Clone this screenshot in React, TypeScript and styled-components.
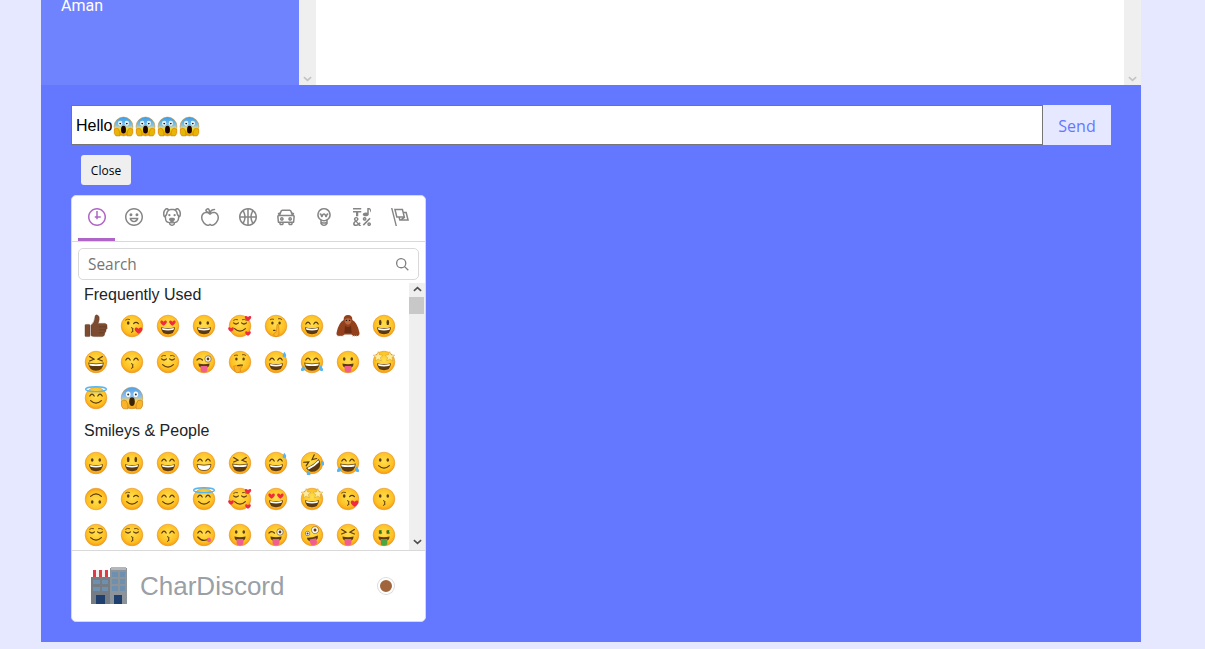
import React from "react";
import styled, { createGlobalStyle } from "styled-components";

const GlobalStyle = createGlobalStyle`
  html, body {
    margin: 0;
    height: 100%;
    overflow: hidden;
    background-color: #e6e8ff;
  }
`;

const BROWN = "#5b3a12";
const RED = "#ef2b3f";
const BLUE = "#56b4f0";
const PINK = "#f0608f";

type Eyes = "dot" | "tall" | "arc" | "cross" | "closed" | "wink" | "heart" | "star" | "flat" | "winkBig" | "zany";
type Mouth = "grin" | "beam" | "wide" | "smile" | "small" | "kiss" | "tongue" | "yum" | "none";
type Extra = "hearts" | "halo" | "sweat" | "tears" | "kissHeart" | "shush" | "think" | "money";

interface FaceSpec {
  eyes: Eyes;
  mouth: Mouth;
  extra?: Extra;
  rotate?: number;
}

const FACES: Record<string, FaceSpec> = {
  grinning: { eyes: "dot", mouth: "grin" },
  smiley: { eyes: "tall", mouth: "grin" },
  smile: { eyes: "arc", mouth: "grin" },
  beam: { eyes: "arc", mouth: "beam" },
  laughing: { eyes: "cross", mouth: "wide" },
  sweat: { eyes: "arc", mouth: "grin", extra: "sweat" },
  rofl: { eyes: "cross", mouth: "wide", extra: "tears", rotate: -35 },
  joy: { eyes: "arc", mouth: "wide", extra: "tears" },
  slight: { eyes: "dot", mouth: "smile" },
  upside: { eyes: "dot", mouth: "smile", rotate: 180 },
  wink: { eyes: "wink", mouth: "smile" },
  blush: { eyes: "arc", mouth: "smile" },
  halo: { eyes: "arc", mouth: "smile", extra: "halo" },
  hearts: { eyes: "closed", mouth: "smile", extra: "hearts" },
  heartEyes: { eyes: "heart", mouth: "grin" },
  star: { eyes: "star", mouth: "grin" },
  kissHeart: { eyes: "wink", mouth: "kiss", extra: "kissHeart" },
  kissing: { eyes: "dot", mouth: "kiss" },
  relaxed: { eyes: "closed", mouth: "smile" },
  kissClosed: { eyes: "closed", mouth: "kiss" },
  kissSmile: { eyes: "arc", mouth: "kiss" },
  yum: { eyes: "arc", mouth: "yum" },
  tongue: { eyes: "dot", mouth: "tongue" },
  winkTongue: { eyes: "winkBig", mouth: "tongue" },
  zany: { eyes: "zany", mouth: "tongue", rotate: -12 },
  squintTongue: { eyes: "cross", mouth: "tongue" },
  money: { eyes: "dot", mouth: "tongue", extra: "money" },
  relieved: { eyes: "closed", mouth: "smile" },
  shush: { eyes: "flat", mouth: "none", extra: "shush" },
  thinking: { eyes: "flat", mouth: "small", extra: "think" },
};

const heart = (x: number, y: number, s: number) =>
  `M${x} ${y + s}C${x - s * 1.8} ${y - s * 0.1} ${x - s * 0.8} ${y - s * 1.2} ${x} ${y - s * 0.3}C${x + s * 0.8} ${y - s * 1.2} ${x + s * 1.8} ${y - s * 0.1} ${x} ${y + s}Z`;

const star = (x: number, y: number, r: number) => {
  let d = "";
  for (let i = 0; i < 10; i++) {
    const a = (Math.PI * i) / 5 - Math.PI / 2;
    const q = i % 2 ? r * 0.45 : r;
    d += `${i ? "L" : "M"}${(x + q * Math.cos(a)).toFixed(2)} ${(y + q * Math.sin(a)).toFixed(2)}`;
  }
  return d + "Z";
};

const Arc = ({ d, w = 1.2 }: { d: string; w?: number }) => (
  <path d={d} fill="none" stroke={BROWN} strokeWidth={w} strokeLinecap="round" />
);

const FaceEyes = ({ kind }: { kind: Eyes }) => {
  switch (kind) {
    case "dot":
      return (
        <g fill={BROWN}>
          <ellipse cx="8.2" cy="9" rx="1.3" ry="1.8" />
          <ellipse cx="15.8" cy="9" rx="1.3" ry="1.8" />
        </g>
      );
    case "tall":
      return (
        <g fill={BROWN}>
          <ellipse cx="8.2" cy="8.4" rx="1.3" ry="2.7" />
          <ellipse cx="15.8" cy="8.4" rx="1.3" ry="2.7" />
        </g>
      );
    case "arc":
      return (
        <>
          <Arc d="M5.8 10Q8 6.4 10.2 10" />
          <Arc d="M13.8 10Q16 6.4 18.2 10" />
        </>
      );
    case "cross":
      return (
        <>
          <Arc d="M5.6 6.6L10 9.2L5.6 11" />
          <Arc d="M18.4 6.6L14 9.2L18.4 11" />
        </>
      );
    case "closed":
      return (
        <>
          <Arc d="M5.6 8.8Q8 11.2 10.4 8.8" />
          <Arc d="M13.6 8.8Q16 11.2 18.4 8.8" />
          <Arc d="M5.6 6.2Q7.5 4.8 9.6 5.6" w={0.8} />
          <Arc d="M18.4 6.2Q16.5 4.8 14.4 5.6" w={0.8} />
        </>
      );
    case "wink":
      return (
        <>
          <ellipse cx="8.2" cy="9" rx="1.3" ry="1.8" fill={BROWN} />
          <Arc d="M13.6 9.6Q16 7 18.4 9.6" />
          <Arc d="M5.6 6Q7.5 4.6 9.6 5.4" w={0.8} />
        </>
      );
    case "heart":
      return (
        <g fill={RED}>
          <path d={heart(7.6, 8.6, 3.2)} />
          <path d={heart(16.4, 8.6, 3.2)} />
        </g>
      );
    case "star":
      return (
        <g fill="#ffeb9c" stroke="#c58a1a" strokeWidth="0.4">
          <path d={star(6.2, 6.8, 5.2)} />
          <path d={star(17.8, 6.8, 5.2)} />
        </g>
      );
    case "flat":
      return (
        <g fill={BROWN}>
          <ellipse cx="8.4" cy="9" rx="1.2" ry="1.5" />
          <ellipse cx="15.6" cy="9" rx="1.2" ry="1.5" />
          <path d="M6 5.8Q8 4.4 10 5.4" fill="none" stroke={BROWN} strokeWidth="0.8" />
          <path d="M14 4.8Q16 4 18 5.6" fill="none" stroke={BROWN} strokeWidth="0.8" />
        </g>
      );
    case "winkBig":
      return (
        <>
          <Arc d="M5 10Q7.8 7.4 10.4 10" />
          <circle cx="16" cy="9" r="3.2" fill="#fff" stroke={BROWN} strokeWidth="0.6" />
          <circle cx="16" cy="9" r="1.4" fill={BROWN} />
        </>
      );
    case "zany":
      return (
        <>
          <circle cx="8" cy="9.6" r="2.2" fill="#fff" stroke={BROWN} strokeWidth="0.5" />
          <circle cx="8" cy="9.6" r="1" fill={BROWN} />
          <circle cx="16" cy="7.8" r="3.4" fill="#fff" stroke={BROWN} strokeWidth="0.5" />
          <circle cx="16" cy="7.8" r="1.5" fill={BROWN} />
        </>
      );
  }
};

const FaceMouth = ({ kind }: { kind: Mouth }) => {
  switch (kind) {
    case "grin":
      return (
        <>
          <path d="M5 13.2Q12 15 19 13.2Q18.6 20.2 12 20.2Q5.4 20.2 5 13.2Z" fill={BROWN} />
          <path d="M6 14Q12 15.4 18 14L17.6 15.8Q12 17 6.4 15.8Z" fill="#fff" />
        </>
      );
    case "beam":
      return <path d="M5 13.4Q12 15 19 13.4Q18.6 19.6 12 19.6Q5.4 19.6 5 13.4Z" fill="#fff" stroke={BROWN} strokeWidth="0.8" />;
    case "wide":
      return (
        <>
          <path d="M4.2 12.6Q12 14.6 19.8 12.6Q19.2 20.8 12 20.8Q4.8 20.8 4.2 12.6Z" fill={BROWN} />
          <path d="M5.2 13.4Q12 15 18.8 13.4L18.4 15.4Q12 16.8 5.6 15.4Z" fill="#fff" />
        </>
      );
    case "smile":
      return <Arc d="M6.6 14.6Q12 19.6 17.4 14.6" />;
    case "small":
      return <Arc d="M9.6 15.6Q12 14.8 14.4 15.2" />;
    case "kiss":
      return <Arc d="M11.4 13.6Q14.6 14.6 12.4 16Q14.6 17.2 11.4 18.4" w={1} />;
    case "tongue":
      return (
        <>
          <path d="M6.4 13.6Q12 15 17.6 13.6Q17.4 18.4 12 18.4Q6.6 18.4 6.4 13.6Z" fill={BROWN} />
          <path d="M8.6 16H15.4V19.2Q15.4 22.4 12 22.4Q8.6 22.4 8.6 19.2Z" fill={PINK} />
        </>
      );
    case "yum":
      return (
        <>
          <Arc d="M5.8 14Q11 20 17 15.4" />
          <ellipse cx="17" cy="17" rx="2" ry="2.2" fill={PINK} />
        </>
      );
    case "none":
      return null;
  }
};

const FaceExtra = ({ kind }: { kind: Extra }) => {
  switch (kind) {
    case "hearts":
      return (
        <g fill={RED}>
          <path d={heart(20, 4, 3.2)} />
          <path d={heart(3, 15, 2.8)} />
          <path d={heart(20, 19, 2.8)} />
        </g>
      );
    case "halo":
      return <ellipse cx="12" cy="3.2" rx="10.4" ry="2.4" fill="none" stroke={BLUE} strokeWidth="1.4" />;
    case "sweat":
      return <path d="M20.4 1.8Q23.2 5.4 21.6 7Q19.4 8 18.6 6Q18.4 4.4 20.4 1.8Z" fill={BLUE} />;
    case "tears":
      return (
        <g fill={BLUE}>
          <path d="M3.6 15.4Q5.6 18.6 4.6 20.2Q2.6 21.6 1 20.4Q0.4 18.4 3.6 15.4Z" />
          <path d="M20.4 15.4Q23.6 18.4 23 20.4Q21.4 21.6 19.4 20.2Q18.4 18.6 20.4 15.4Z" />
        </g>
      );
    case "kissHeart":
      return <path d={heart(18.6, 16, 3.8)} fill={RED} />;
    case "shush":
      return (
        <>
          <Arc d="M9.6 16.4H11" />
          <path d="M13 10.4Q14.6 10 14.8 12L15 17Q15.8 21 13 22.6Q10 23 9.6 20.4Q10.6 18.4 12.4 17.6Z" fill="#fbb429" stroke="#c9760f" strokeWidth="0.5" />
        </>
      );
    case "think":
      return <path d="M5.6 16Q9 15 10.6 16.8L14 16Q14.6 18 12 18.4L12.6 21.6Q9.8 23.6 7.4 22Q6.6 19.4 5.6 16Z" fill="#fbb429" stroke="#c9760f" strokeWidth="0.5" />;
    case "money":
      return (
        <>
          <rect x="9" y="16" width="6" height="6.6" rx="2" fill="#49a83c" />
          <text x="8.2" y="10.6" fontSize="6" fontFamily="Liberation Sans, sans-serif" fontWeight="700" fill="#2f8f2c" textAnchor="middle">$</text>
          <text x="15.8" y="10.6" fontSize="6" fontFamily="Liberation Sans, sans-serif" fontWeight="700" fill="#2f8f2c" textAnchor="middle">$</text>
        </>
      );
  }
};

const FaceBase = () => <circle cx="12" cy="12" r="10.8" fill="url(#emoji-face)" stroke="#e8912a" strokeWidth="0.6" />;

const Scream = () => (
  <>
    <circle cx="12" cy="12" r="10.8" fill="url(#emoji-scream)" stroke="#c98a1e" strokeWidth="0.5" />
    <g fill="#fff">
      <ellipse cx="8.2" cy="8.2" rx="2.3" ry="2.8" />
      <ellipse cx="15.8" cy="8.2" rx="2.3" ry="2.8" />
    </g>
    <g fill="#253038">
      <circle cx="8.2" cy="8.6" r="1" />
      <circle cx="15.8" cy="8.6" r="1" />
    </g>
    <ellipse cx="12" cy="15.6" rx="2.8" ry="4.4" fill="#3a2208" />
    <g fill="#fbb429" stroke="#b06f10" strokeWidth="0.5">
      <path d="M1.4 15.4Q0.6 21 3.4 22.8L8 22.8Q8.4 18 6.2 14.6Q3.6 13.2 1.4 15.4Z" />
      <path d="M22.6 15.4Q23.4 21 20.6 22.8L16 22.8Q15.6 18 17.8 14.6Q20.4 13.2 22.6 15.4Z" />
    </g>
  </>
);

const Thumb = () => (
  <>
    <path
      d="M1 11.4Q1 10.4 2 10.4H5Q6 10.4 6 11.4V21.4Q6 22.6 5 22.6H2Q1 22.6 1 21.4ZM7 21.6V11.2Q10.8 8 11 2.4Q11.4 0.4 13.4 1Q15.6 2 15.2 5.4Q15 7.6 14 9.4H21Q23.6 10 23 12.6Q23.8 14.8 22 15.8Q22.6 18 20.8 18.8Q21 22.4 18 22.6H10.6Q8.2 22.6 7 21.6Z"
      fill="#7d4c30"
      stroke="#5a3420"
      strokeWidth="0.4"
    />
    <path d="M15 12.8H22.6M15 15.8H22M15 18.8H20.6" stroke="#5a3420" strokeWidth="0.6" fill="none" />
  </>
);

const Orangutan = () => (
  <>
    <path d="M7.6 6Q7.6 1 12 1Q16.4 1 16.4 6Q21.4 8.6 23.4 18.6Q24 21.6 21.6 22H17.6L15.4 20.4H8.6L6.4 22H2.4Q0 21.6 0.6 18.6Q2.6 8.6 7.6 6Z" fill="#93401d" />
    <path d="M8.8 5.2Q12 3.2 15.2 5.2Q16.2 9.6 12 10.8Q7.8 9.6 8.8 5.2Z" fill="#b96a3f" />
    <circle cx="10.4" cy="6.4" r="0.7" fill="#2a1508" />
    <circle cx="13.6" cy="6.4" r="0.7" fill="#2a1508" />
    <path d="M9 11.6Q12 14.6 15 11.6L15.6 19H8.4Z" fill="#6e2c12" />
    <path d="M1.6 22H8M16 22H22.4" stroke="#c9b8a5" strokeWidth="1.2" strokeDasharray="1 1" />
  </>
);

const Building = () => (
  <svg viewBox="0 0 38 38" width="38" height="38">
    <rect x="20" y="1" width="17" height="36" fill="#8d939a" />
    <rect x="21" y="0" width="15" height="3" fill="#b3b7bb" />
    <rect x="1" y="10" width="19" height="27" fill="#767c84" />
    <rect x="3" y="3" width="15" height="7" fill="#f1efee" />
    <rect x="3" y="3" width="3" height="7" fill="#dc3a46" />
    <rect x="9" y="3" width="3" height="7" fill="#dc3a46" />
    <rect x="15" y="3" width="3" height="7" fill="#dc3a46" />
    {[5, 12, 19].map((y) => (
      <g key={y} fill="#6d8fb0">
        <rect x="22" y={y} width="6" height="5" />
        <rect x="30" y={y} width="5" height="5" />
      </g>
    ))}
    {[13, 20].map((y) => (
      <g key={y} fill="#6d8fb0">
        <rect x="3" y={y} width="7" height="4" />
        <rect x="12" y={y} width="6" height="4" />
      </g>
    ))}
    <rect x="6" y="28" width="9" height="9" fill="#1f3f6e" />
    <rect x="24" y="28" width="8" height="9" fill="#1f3f6e" />
  </svg>
);

const Emoji = ({ name, size = 24 }: { name: string; size?: number }) => {
  const spec = FACES[name];
  return (
    <svg viewBox="0 0 24 24" width={size} height={size}>
      {name === "thumb" && <Thumb />}
      {name === "orangutan" && <Orangutan />}
      {name === "scream" && <Scream />}
      {spec && (
        <g transform={spec.rotate ? `rotate(${spec.rotate} 12 12)` : undefined}>
          <FaceBase />
          <FaceEyes kind={spec.eyes} />
          <FaceMouth kind={spec.mouth} />
          {spec.extra && <FaceExtra kind={spec.extra} />}
        </g>
      )}
    </svg>
  );
};

const EmojiDefs = () => (
  <DefsSvg width="0" height="0">
    <defs>
      <radialGradient id="emoji-face" cx="0.5" cy="0.42" r="0.6">
        <stop offset="0" stopColor="#ffdf4d" />
        <stop offset="0.7" stopColor="#fdc022" />
        <stop offset="1" stopColor="#f6980f" />
      </radialGradient>
      <linearGradient id="emoji-scream" x1="0" y1="0" x2="0" y2="1">
        <stop offset="0" stopColor="#4f9fe8" />
        <stop offset="0.45" stopColor="#8fc0ec" />
        <stop offset="0.62" stopColor="#fcd24a" />
        <stop offset="1" stopColor="#f59a0d" />
      </linearGradient>
    </defs>
  </DefsSvg>
);

const CATEGORY_ICONS: { name: string; paths: string[] }[] = [
  {
    name: "recent",
    paths: [
      "M13 4h-2l-.001 7H9v2h2v2h2v-2h4v-2h-4z",
      "M12 0C5.373 0 0 5.373 0 12s5.373 12 12 12 12-5.373 12-12S18.627 0 12 0m0 22C6.486 22 2 17.514 2 12S6.486 2 12 2s10 4.486 10 10-4.486 10-10 10",
    ],
  },
  {
    name: "people",
    paths: [
      "M12 0C5.373 0 0 5.373 0 12s5.373 12 12 12 12-5.373 12-12S18.627 0 12 0m0 22C6.486 22 2 17.514 2 12S6.486 2 12 2s10 4.486 10 10-4.486 10-10 10",
      "M8 7a2 2 0 1 0-.001 3.999A2 2 0 0 0 8 7M16 7a2 2 0 1 0-.001 3.999A2 2 0 0 0 16 7M15.232 15c-.693 1.195-1.87 2-3.349 2-1.477 0-2.655-.805-3.347-2H15m3-2H6a6 6 0 1 0 12 0",
    ],
  },
  {
    name: "nature",
    paths: [
      "M15.5 8a1.5 1.5 0 1 0 .001 3.001A1.5 1.5 0 0 0 15.5 8M8.5 8a1.5 1.5 0 1 0 .001 3.001A1.5 1.5 0 0 0 8.5 8",
      "M18.933 0h-.027c-.97 0-2.138.787-3.018 1.497-1.274-.374-2.612-.51-3.887-.51-1.285 0-2.616.133-3.874.517C7.245.79 6.069 0 5.093 0h-.027C3.352 0 .07 2.67.002 7.026c-.039 2.479.276 4.238 1.04 5.013.254.258.882.677 1.295.882.191 3.177.922 5.238 2.536 6.38.897.637 2.187.949 3.2 1.102C8.04 20.6 8 20.795 8 21c0 1.773 2.35 3 4 3 1.648 0 4-1.227 4-3 0-.201-.038-.393-.072-.586 2.573-.385 5.435-1.877 5.925-7.587.396-.22.887-.568 1.104-.788.763-.774 1.079-2.534 1.04-5.013C23.929 2.67 20.646 0 18.933 0M3.223 9.135c-.237.281-.837 1.155-.884 1.238-.15-.41-.368-1.349-.337-3.291.051-3.281 2.478-4.972 3.091-5.031.256.015.731.27 1.265.646-1.11 1.171-2.275 2.915-2.352 5.125-.133.546-.398.858-.783 1.313M12 22c-.901 0-1.954-.693-2-1 0-.654.475-1.236 1-1.602V20a1 1 0 1 0 2 0v-.602c.524.365 1 .947 1 1.602-.046.307-1.099 1-2 1m3-3.48v.02a4.752 4.752 0 0 0-1.262-1.02c1.092-.516 2.239-1.334 2.239-2.217 0-1.842-1.781-2.195-3.977-2.195-2.196 0-3.978.354-3.978 2.195 0 .883 1.148 1.701 2.238 2.217A4.8 4.8 0 0 0 9 18.539v-.025c-1-.076-2.182-.281-2.973-.842-1.301-.92-1.838-3.045-1.853-6.478l.023-.041c.496-.826 1.49-1.45 1.804-3.102 0-2.047 1.357-3.631 2.362-4.522C9.37 3.178 10.555 3 11.948 3c1.447 0 2.685.192 3.733.57 1 .9 2.316 2.465 2.316 4.48.313 1.651 1.307 2.275 1.803 3.102.035.058.068.117.102.178-.059 5.967-1.949 7.01-4.902 7.19m6.628-8.202c-.037-.065-.074-.13-.113-.195a7.587 7.587 0 0 0-.739-.987c-.385-.455-.648-.768-.782-1.313-.076-2.209-1.241-3.954-2.353-5.124.531-.376 1.004-.63 1.261-.647.636.071 3.044 1.764 3.096 5.031.027 1.81-.347 3.218-.37 3.235",
    ],
  },
  {
    name: "foods",
    paths: [
      "M17 4.978c-1.838 0-2.876.396-3.68.934.513-1.172 1.768-2.934 4.68-2.934a1 1 0 0 0 0-2c-2.921 0-4.629 1.365-5.547 2.512-.064.078-.119.162-.18.244C11.73 1.838 10.798.023 9.207.023 8.579.022 7.85.306 7 .978 5.027 2.54 5.329 3.902 6.492 4.999 3.609 5.222 0 7.352 0 12.969c0 4.582 4.961 11.009 9 11.009 1.975 0 2.371-.486 3-1 .629.514 1.025 1 3 1 4.039 0 9-6.418 9-11 0-5.953-4.055-8-7-8M8.242 2.546c.641-.508.943-.523.965-.523.426.169.975 1.405 1.357 3.055-1.527-.629-2.741-1.352-2.98-1.846.059-.112.241-.356.658-.686M15 21.978c-1.08 0-1.21-.109-1.559-.402l-.176-.146c-.367-.302-.816-.452-1.266-.452s-.898.15-1.266.452l-.176.146c-.347.292-.477.402-1.557.402-2.813 0-7-5.389-7-9.009 0-5.823 4.488-5.991 5-5.991 1.939 0 2.484.471 3.387 1.251l.323.276a1.995 1.995 0 0 0 2.58 0l.323-.276c.902-.78 1.447-1.251 3.387-1.251.512 0 5 .168 5 6 0 3.617-4.187 9-7 9",
    ],
  },
  {
    name: "activity",
    paths: [
      "M12 0C5.373 0 0 5.373 0 12c0 6.628 5.373 12 12 12 6.628 0 12-5.372 12-12 0-6.627-5.372-12-12-12m9.949 11H17.05c.224-2.527 1.232-4.773 1.968-6.113A9.966 9.966 0 0 1 21.949 11M13 11V2.051a9.945 9.945 0 0 1 4.432 1.564c-.858 1.491-2.156 4.22-2.392 7.385H13zm-2 0H8.961c-.238-3.165-1.536-5.894-2.393-7.385A9.95 9.95 0 0 1 11 2.051V11zm0 2v8.949a9.937 9.937 0 0 1-4.432-1.564c.857-1.492 2.155-4.221 2.393-7.385H11zm4.04 0c.236 3.164 1.534 5.893 2.392 7.385A9.92 9.92 0 0 1 13 21.949V13h2.04zM4.982 4.887C5.718 6.227 6.726 8.473 6.951 11h-4.9a9.977 9.977 0 0 1 2.931-6.113M2.051 13h4.9c-.226 2.527-1.233 4.771-1.969 6.113A9.972 9.972 0 0 1 2.051 13m16.967 6.113c-.735-1.342-1.744-3.586-1.968-6.113h4.899a9.961 9.961 0 0 1-2.931 6.113",
    ],
  },
  {
    name: "places",
    paths: [
      "M6.5 12C5.122 12 4 13.121 4 14.5S5.122 17 6.5 17 9 15.879 9 14.5 7.878 12 6.5 12m0 3c-.275 0-.5-.225-.5-.5s.225-.5.5-.5.5.225.5.5-.225.5-.5.5M17.5 12c-1.378 0-2.5 1.121-2.5 2.5s1.122 2.5 2.5 2.5 2.5-1.121 2.5-2.5-1.122-2.5-2.5-2.5m0 3c-.275 0-.5-.225-.5-.5s.225-.5.5-.5.5.225.5.5-.225.5-.5.5",
      "M22.482 9.494l-1.039-.346L21.4 9h.6c.552 0 1-.439 1-.992 0-.006-.003-.008-.003-.008H23c0-1-.889-2-1.984-2h-.642l-.731-1.717C19.262 3.012 18.091 2 16.764 2H7.236C5.909 2 4.738 3.012 4.357 4.283L3.626 6h-.642C1.889 6 1 7 1 8h.003S1 8.002 1 8.008C1 8.561 1.448 9 2 9h.6l-.043.148-1.039.346a2.001 2.001 0 0 0-1.359 2.097l.751 7.508a1 1 0 0 0 .994.901H3v1c0 1.103.896 2 2 2h2c1.104 0 2-.897 2-2v-1h6v1c0 1.103.896 2 2 2h2c1.104 0 2-.897 2-2v-1h1.096a.999.999 0 0 0 .994-.901l.751-7.508a2.001 2.001 0 0 0-1.359-2.097M6.273 4.857C6.402 4.43 6.788 4 7.236 4h9.527c.448 0 .834.43.963.857L19.313 9H4.688l1.585-4.143zM7 21H5v-1h2v1zm12 0h-2v-1h2v1zm2.189-3H2.811l-.662-6.607L3 11h18l.852.393L21.189 18z",
    ],
  },
  {
    name: "objects",
    paths: [
      "M12 0a9 9 0 0 0-5 16.482V21s2.035 3 5 3 5-3 5-3v-4.518A9 9 0 0 0 12 0zm0 2c3.86 0 7 3.141 7 7s-3.14 7-7 7-7-3.141-7-7 3.14-7 7-7zM9 17.477c.94.332 1.946.523 3 .523s2.06-.19 3-.523v.834c-.91.436-1.925.689-3 .689a6.924 6.924 0 0 1-3-.69v-.833zm.236 3.07A8.854 8.854 0 0 0 12 21c.965 0 1.888-.167 2.758-.451C14.155 21.173 13.153 22 12 22c-1.102 0-2.117-.789-2.764-1.453z",
      "M14.745 12.449h-.004c-.852-.024-1.188-.858-1.577-1.824-.421-1.061-.703-1.561-1.182-1.566h-.009c-.481 0-.783.497-1.235 1.537-.436.982-.801 1.811-1.636 1.791l-.276-.043c-.565-.171-.853-.691-1.284-1.794-.125-.313-.202-.632-.27-.913-.051-.213-.127-.53-.195-.634C7.067 9.004 7.039 9 6.99 9A1 1 0 0 1 7 7h.01c1.662.017 2.015 1.373 2.198 2.134.486-.981 1.304-2.058 2.797-2.075 1.531.018 2.28 1.153 2.731 2.141l.002-.008C14.944 8.424 15.327 7 16.979 7h.032A1 1 0 1 1 17 9h-.011c-.149.076-.256.474-.319.709a6.484 6.484 0 0 1-.311.951c-.429.973-.79 1.789-1.614 1.789",
    ],
  },
  {
    name: "symbols",
    paths: [
      "M0 0h11v2H0zM4 11h3V6h4V4H0v2h4zM15.5 17c1.381 0 2.5-1.116 2.5-2.493s-1.119-2.493-2.5-2.493S13 13.13 13 14.507 14.119 17 15.5 17m0-2.986c.276 0 .5.222.5.493 0 .272-.224.493-.5.493s-.5-.221-.5-.493.224-.493.5-.493M21.5 19.014c-1.381 0-2.5 1.116-2.5 2.493S20.119 24 21.5 24s2.5-1.116 2.5-2.493-1.119-2.493-2.5-2.493m0 2.986a.497.497 0 0 1-.5-.493c0-.271.224-.493.5-.493s.5.222.5.493a.497.497 0 0 1-.5.493M22 13l-9 9 1.513 1.5 8.99-9.009zM17 11c2.209 0 4-1.119 4-2.5V2s.985-.161 1.498.949C23.01 4.055 23 6 23 6s1-1.119 1-3.135C24-.02 21 0 21 0h-2v6.347A5.853 5.853 0 0 0 17 6c-2.209 0-4 1.119-4 2.5s1.791 2.5 4 2.5M10.297 20.482l-1.475-1.585a47.54 47.54 0 0 1-1.442 1.129c-.307-.288-.989-1.016-2.045-2.183.902-.836 1.479-1.466 1.729-1.892s.376-.871.376-1.336c0-.592-.273-1.178-.818-1.759-.546-.581-1.329-.871-2.349-.871-1.008 0-1.79.293-2.344.879-.556.587-.832 1.181-.832 1.784 0 .813.419 1.748 1.256 2.805-.847.614-1.444 1.208-1.794 1.784a3.465 3.465 0 0 0-.523 1.833c0 .857.308 1.56.924 2.107.616.549 1.423.823 2.42.823 1.173 0 2.444-.379 3.813-1.137L8.235 24h2.819l-2.09-2.383 1.333-1.135zm-6.736-6.389a1.02 1.02 0 0 1 .73-.286c.31 0 .559.085.747.254a.849.849 0 0 1 .283.659c0 .518-.419 1.112-1.257 1.784-.536-.651-.805-1.231-.805-1.742a.901.901 0 0 1 .302-.669M3.74 22c-.427 0-.778-.116-1.057-.349-.279-.232-.418-.487-.418-.766 0-.594.509-1.288 1.527-2.083.968 1.134 1.717 1.946 2.248 2.438-.921.507-1.686.76-2.3.76",
    ],
  },
  {
    name: "flags",
    paths: ["M0 0l6.084 24H8L1.916 0zM21 5h-4l-1-4H4l3 12h3l1 4h13L21 5zM6.563 3h7.875l2 8H8.563l-2-8zm8.832 10l-2.856 1.904L12.063 13h3.332zM19 13l-1.5-6h1.938l2 8H16l3-2z"],
  },
];

const FREQUENT = [
  "thumb", "kissHeart", "heartEyes", "grinning", "hearts", "shush", "smile", "orangutan", "smiley",
  "laughing", "kissSmile", "relieved", "winkTongue", "thinking", "sweat", "joy", "tongue", "star",
  "halo", "scream",
];

const SMILEYS = [
  "grinning", "smiley", "smile", "beam", "laughing", "sweat", "rofl", "joy", "slight",
  "upside", "wink", "blush", "halo", "hearts", "heartEyes", "star", "kissHeart", "kissing",
  "relaxed", "kissClosed", "kissSmile", "yum", "tongue", "winkTongue", "zany", "squintTongue", "money",
];

const Chevron = ({ up }: { up?: boolean }) => (
  <svg viewBox="0 0 10 6" width="9" height="6">
    <path d={up ? "M1 5L5 1.5L9 5" : "M1 1L5 4.5L9 1"} fill="none" stroke="currentColor" strokeWidth="1.8" />
  </svg>
);

const App = () => (
  <>
    <GlobalStyle />
    <EmojiDefs />
    <Page>
      <ChatRow>
        <Sidebar>
          <UserName>Aman</UserName>
        </Sidebar>
        <ChatBar>
          <Chevron />
        </ChatBar>
        <Messages />
        <ChatBar>
          <Chevron />
        </ChatBar>
      </ChatRow>
      <Composer>
        <InputRow>
          <MessageInput>
            Hello
            {[0, 1, 2, 3].map((i) => (
              <InputEmoji key={i}>
                <Emoji name="scream" size={21} />
              </InputEmoji>
            ))}
          </MessageInput>
          <SendButton>Send</SendButton>
        </InputRow>
        <CloseButton>Close</CloseButton>
        <Picker>
          <Tabs>
            {CATEGORY_ICONS.map((cat, i) => (
              <Tab key={cat.name} $active={i === 0}>
                <svg viewBox="0 0 24 24" width="18" height="18">
                  {cat.paths.map((d) => (
                    <path key={d} d={d} fill="currentColor" />
                  ))}
                </svg>
              </Tab>
            ))}
          </Tabs>
          <SearchBox>
            <SearchPlaceholder>Search</SearchPlaceholder>
            <svg viewBox="0 0 20 20" width="13" height="13">
              <path d="M12.9 14.32a8 8 0 1 1 1.41-1.41l5.35 5.33-1.42 1.42-5.33-5.34zM8 14A6 6 0 1 0 8 2a6 6 0 0 0 0 12z" fill="#808080" />
            </svg>
          </SearchBox>
          <ScrollArea>
            <EmojiList>
              <SectionLabel>Frequently Used</SectionLabel>
              <EmojiGrid>
                {FREQUENT.map((name, i) => (
                  <EmojiCell key={i}>
                    <Emoji name={name} />
                  </EmojiCell>
                ))}
              </EmojiGrid>
              <SectionLabel>Smileys &amp; People</SectionLabel>
              <EmojiGrid>
                {SMILEYS.map((name, i) => (
                  <EmojiCell key={i}>
                    <Emoji name={name} />
                  </EmojiCell>
                ))}
              </EmojiGrid>
            </EmojiList>
            <PickerBar>
              <Chevron up />
              <Thumbnail />
              <BarSpacer />
              <Chevron />
            </PickerBar>
          </ScrollArea>
          <PickerFooter>
            <Building />
            <BrandName>CharDiscord</BrandName>
            <SkinTone />
          </PickerFooter>
        </Picker>
      </Composer>
    </Page>
  </>
);

const DefsSvg = styled.svg`
  position: absolute;
`;

const Page = styled.div`
  width: 1100px;
  margin-left: 41px;
`;

const ChatRow = styled.div`
  display: flex;
  height: 85px;
  overflow: hidden;
  background-color: white;
`;

const Sidebar = styled.div`
  width: 258px;
  display: flex;
  flex-direction: column;
  justify-content: flex-end;
  padding: 0 0 70px 20px;
  box-sizing: border-box;
  background-color: #7083ff;
`;

const UserName = styled.div`
  font-family: Roboto, sans-serif;
  font-size: 16px;
  line-height: 19px;
  color: white;
`;

const ChatBar = styled.div`
  width: 17px;
  display: flex;
  align-items: flex-end;
  justify-content: center;
  padding-bottom: 3px;
  box-sizing: border-box;
  background-color: #efefef;
  color: #c4c4c4;
`;

const Messages = styled.div`
  flex: 1;
  background-color: white;
`;

const Composer = styled.div`
  background-color: #6478ff;
  padding: 20px 30px;
  height: 557px;
  box-sizing: border-box;
`;

const InputRow = styled.div`
  display: flex;
  height: 40px;
`;

const MessageInput = styled.div`
  flex: 1;
  display: flex;
  align-items: center;
  padding: 2px 0 0 4px;
  box-sizing: border-box;
  background-color: white;
  border: 1px solid #767676;
  font-family: "Liberation Sans", sans-serif;
  font-size: 16px;
  color: black;
`;

const InputEmoji = styled.span`
  display: flex;
  width: 22px;
  justify-content: center;
  filter: contrast(1.4) brightness(0.9);
`;

const SendButton = styled.div`
  width: 68px;
  display: flex;
  align-items: center;
  justify-content: center;
  padding-top: 2px;
  box-sizing: border-box;
  background-color: #e6e8ff;
  color: #6478ff;
  font-family: "Open Sans", sans-serif;
  font-size: 16px;
`;

const CloseButton = styled.button`
  display: block;
  width: 50px;
  height: 30px;
  margin: 10px 0 10px 10px;
  padding: 0;
  border: none;
  border-radius: 3px;
  background-color: #efefef;
  color: black;
  font-family: "Open Sans", sans-serif;
  font-size: 12px;
`;

const Picker = styled.div`
  width: 355px;
  height: 427px;
  box-sizing: border-box;
  display: flex;
  flex-direction: column;
  background-color: white;
  border: 1px solid #d9d9d9;
  border-radius: 5px;
  overflow: hidden;
`;

const Tabs = styled.div`
  display: flex;
  height: 46px;
  flex-shrink: 0;
  padding: 0 6px;
  box-sizing: border-box;
  border-bottom: 1px solid #d9d9d9;
`;

const Tab = styled.div<{ $active: boolean }>`
  width: 38px;
  display: flex;
  justify-content: center;
  padding-top: 12px;
  box-sizing: border-box;
  color: ${(p) => (p.$active ? "#ae65c5" : "#858585")};
  border-bottom: 3px solid ${(p) => (p.$active ? "#ae65c5" : "transparent")};

  &:first-child {
    width: 37px;
  }
`;

const SearchBox = styled.div`
  height: 32px;
  flex-shrink: 0;
  margin: 6px 6px 3px;
  padding: 0 9px;
  box-sizing: border-box;
  display: flex;
  align-items: center;
  justify-content: space-between;
  border: 1px solid #d9d9d9;
  border-radius: 5px;
`;

const SearchPlaceholder = styled.span`
  font-family: "Open Sans", sans-serif;
  font-size: 15.4px;
  color: #757575;
`;

const ScrollArea = styled.div`
  flex: 1;
  display: flex;
  min-height: 0;
`;

const EmojiList = styled.div`
  flex: 1;
  overflow: hidden;
  padding-left: 6px;
`;

const SectionLabel = styled.div`
  height: 22px;
  margin-bottom: 3px;
  padding-left: 6px;
  font-family: "Liberation Sans", sans-serif;
  font-size: 16px;
  line-height: 24px;
  color: #222427;
`;

const EmojiGrid = styled.div`
  display: grid;
  grid-template-columns: repeat(9, 36px);
  grid-auto-rows: 36px;
  margin-bottom: 3px;

  & + ${SectionLabel} {
    margin-bottom: 4px;
  }
`;

const EmojiCell = styled.span`
  display: flex;
  align-items: center;
  justify-content: center;
`;

const PickerBar = styled.div`
  width: 16px;
  display: flex;
  flex-direction: column;
  align-items: center;
  padding: 3px 0 5px;
  box-sizing: border-box;
  background-color: #efefef;
  color: #505050;
`;

const Thumbnail = styled.div`
  align-self: flex-start;
  width: 15px;
  height: 17px;
  margin-top: 5px;
  background-color: #c8c8c8;
`;

const BarSpacer = styled.div`
  flex: 1;
`;

const PickerFooter = styled.div`
  height: 71px;
  flex-shrink: 0;
  display: flex;
  align-items: center;
  padding: 0 31px 0 18px;
  box-sizing: border-box;
  border-top: 1px solid #d9d9d9;
`;

const BrandName = styled.span`
  flex: 1;
  margin-left: 12px;
  font-family: "Liberation Sans", sans-serif;
  font-size: 26px;
  color: #99a0a6;
`;

const SkinTone = styled.span`
  width: 12px;
  height: 12px;
  border-radius: 50%;
  background-color: #a0653c;
  border: 2px solid white;
  box-shadow: 0 0 0 1px #dcdcdc;
`;

export default App;
